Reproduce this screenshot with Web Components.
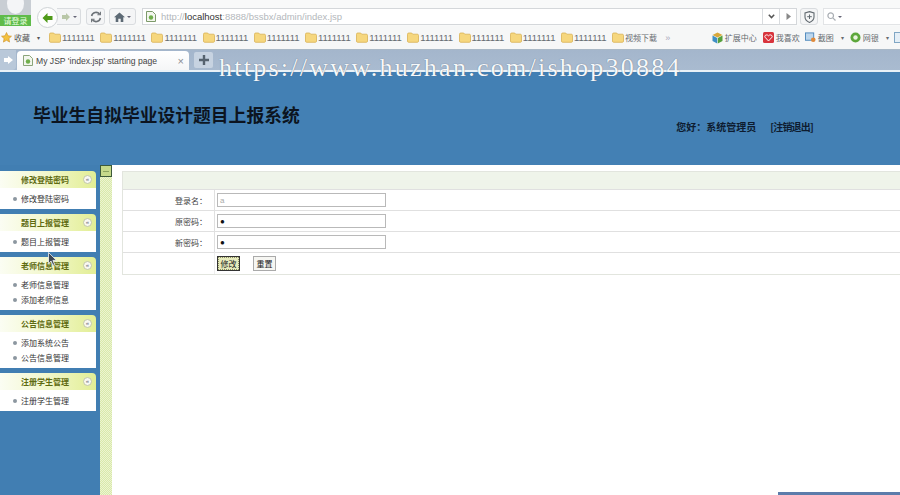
<!DOCTYPE html>
<html lang="zh">
<head>
<meta charset="utf-8">
<title>My JSP 'index.jsp' starting page</title>
<style>
  html, body { margin: 0; padding: 0; height: 100%; overflow: hidden; background: #fff; }
  body { width: 900px; height: 495px; position: relative; display: flex; flex-direction: column;
         font-family: "Liberation Sans", "Noto Sans CJK SC", sans-serif; font-size: 8px; color: #222; }
  app-body { flex: 1; min-height: 0; }
</style>
</head>
<body>
<browser-toolbar></browser-toolbar>
<bookmark-bar></bookmark-bar>
<tab-strip></tab-strip>
<app-header></app-header>
<app-body>
  <side-menu slot="side">
    <menu-group title="修改登陆密码"><menu-item>修改登陆密码</menu-item></menu-group>
    <menu-group title="题目上报管理"><menu-item>题目上报管理</menu-item></menu-group>
    <menu-group title="老师信息管理"><menu-item>老师信息管理</menu-item><menu-item>添加老师信息</menu-item></menu-group>
    <menu-group title="公告信息管理"><menu-item>添加系统公告</menu-item><menu-item>公告信息管理</menu-item></menu-group>
    <menu-group title="注册学生管理"><menu-item>注册学生管理</menu-item></menu-group>
  </side-menu>
  <password-form slot="main"></password-form>
</app-body>
<mouse-cursor></mouse-cursor>
<water-mark></water-mark>

<script>
const FOLDER = `<svg width="13" height="11" viewBox="0 0 13 11"><path d="M.5 2.2C.5 1.4 1 1 1.7 1h3l1 1.2h4.600c.7 0 1.200.4 1.200 1.100v5.900c0 .7-.5 1.100-1.200 1.100H1.700c-.7 0-1.200-.4-1.200-1.100z" fill="#f6d77e" stroke="#d9b355" stroke-width=".8"/></svg>`;

class BrowserToolbar extends HTMLElement {
  constructor() {
    super();
    this.attachShadow({ mode: 'open' }).innerHTML = `
      <style>
        :host { display: flex; height: 26px; align-items: flex-start; background: #f8f9f9; box-sizing: border-box; }
        .avatar { width: 31px; height: 26px; background: #c9ced4; display: flex; flex-direction: column; flex: none; overflow: hidden; }
        .avatar i { display: block; width: 17px; height: 21px; border-radius: 50%; background: #f4f5f7; margin: -7px 0 0 7px; flex: none; }
        .avatar span { background: #5fbb4a; color: #eaffe0; font: 8px/11px "Noto Sans CJK SC", sans-serif; height: 11px; text-align: center; margin-top: auto; flex: none; }
        .back { width: 19px; height: 19px; margin: 7px 0 0 6px; border-radius: 50%; background: #fdfdfd; border: 1px solid #cfd3d6; display: flex; align-items: center; justify-content: center; flex: none; z-index: 1; }
        .btn { height: 15px; margin-top: 8px; border: 1px solid #d9dcdf; border-radius: 3px; background: #f4f5f6; display: flex; align-items: center; justify-content: center; gap: 2px; flex: none; }
        .fwd { width: 23px; margin-left: -1px; border-left: 0; border-radius: 0 3px 3px 0; }
        .reload { width: 17px; margin-left: 5px; }
        .home { width: 25px; margin-left: 4px; }
        .caret { width: 0; height: 0; border: 2px solid transparent; border-top: 2px solid #667; border-bottom: 0; }
        .url { flex: 1; height: 15px; margin: 8px 0 0 6px; border: 1px solid #d4d7da; background: #fff; display: flex; align-items: center; font: 9.500px "Liberation Sans", sans-serif; color: #b4b8bc; min-width: 0; }
        .url > svg { margin: 0 5px 0 3px; }
        .url b { font-weight: normal; color: #333; }
        .url .fill { flex: 1; }
        .seg { width: 16px; height: 15px; border-left: 1px solid #d9dcdf; display: flex; align-items: center; justify-content: center; }
        .shield { width: 16px; margin-left: 3px; }
        .search { width: 77px; height: 17px; margin: 8px 0 0 5px; background: #fff; border: 1px solid #e2e4e6; border-right: 0; display: flex; align-items: center; padding-left: 3px; gap: 2px; flex: none; box-sizing: border-box; }
      </style>
      <div class="avatar"><i></i><span>请登录</span></div>
      <div class="back"><svg width="13" height="12" viewBox="0 0 13 12"><path d="M6.500 1 1.500 6l5 5V8h5V4h-5z" fill="#4f9a18"/></svg></div>
      <div class="btn fwd"><svg width="10" height="10" viewBox="0 0 10 10"><path d="M5 1l4 4-4 4V7H1V3h4z" fill="#b9c7a8"/></svg><span class="caret"></span></div>
      <div class="btn reload"><svg width="12" height="12" viewBox="0 0 12 12" fill="none" stroke="#6d7378" stroke-width="1.600"><path d="M1.600 5A4.500 4.500 0 0 1 9.600 3.200M10.400 7A4.500 4.500 0 0 1 2.400 8.800"/><path d="M10.400 .8v3H7.400M1.600 11.200v-3h3" stroke-width="1.100"/></svg></div>
      <div class="btn home"><svg width="11" height="10" viewBox="0 0 11 10"><path d="M5.500 .5 0 5.300h1.700V10h2.600V6.800h2.400V10h2.600V5.300H11z" fill="#5d6a75"/></svg><span class="caret"></span></div>
      <div class="url">
        <svg width="10" height="11" viewBox="0 0 10 11"><path d="M.5.5h6l3 3v7h-9z" fill="#f3f6ee" stroke="#7d9a6a"/><circle cx="5" cy="6.500" r="2.200" fill="#6fae4b"/></svg>
        <span>http://<b>localhost</b>:8888/bssbx/admin/index.jsp</span><span class="fill"></span>
        <span class="seg"><svg width="7" height="5" viewBox="0 0 7 5"><path d="M.8.8 3.500 3.600 6.200.8" fill="none" stroke="#555" stroke-width="1.500"/></svg></span>
        <span class="seg"><svg width="5" height="7" viewBox="0 0 5 7"><path d="M.5 0 5 3.500.5 7z" fill="#888"/></svg></span>
      </div>
      <div class="btn shield"><svg width="11" height="12" viewBox="0 0 11 12"><path d="M5.500.6 10 2v4c0 2.800-2 4.400-4.500 5.400C3 10.400 1 8.800 1 6V2z" fill="none" stroke="#626a70" stroke-width="1.100"/><path d="M5.500 3.500v4.500M3.200 5.700h4.600" stroke="#626a70"/></svg></div>
      <div class="search"><svg width="9" height="9" viewBox="0 0 9 9" fill="none" stroke="#a9aeb3" stroke-width="1.200"><circle cx="3.700" cy="3.700" r="2.800"/><path d="M5.800 5.800 8.500 8.500"/></svg><span class="caret"></span></div>`;
  }
}

class BookmarkBar extends HTMLElement {
  constructor() {
    super();
    const links = Array(11).fill('1111111').concat('视频下载');
    this.attachShadow({ mode: 'open' }).innerHTML = `
      <style>
        :host { display: flex; height: 24px; background: #f6f7f7; align-items: center; border-bottom: 1px solid #a9b8c6; box-sizing: border-box; font: 8px "Liberation Sans", "Noto Sans CJK SC", sans-serif; color: #666b70; overflow: hidden; }
        .fav { display: flex; align-items: center; gap: 2px; margin-left: 1px; width: 48px; flex: none; color: #555; }
        .fav em { font-style: normal; margin-left: 5px; font-size: 6px; }
        .links { display: flex; flex: none; }
        .l { width: 51.200px; display: flex; align-items: center; gap: 0; flex: none; font-size: 9.500px; white-space: nowrap; }
        .l.cjk { font-size: 8px; }
        .more { width: 48.600px; color: #aab; flex: none; box-sizing: border-box; padding-left: 2px; font-size: 9px; }
        .tools { display: flex; align-items: center; flex: none; }
        .t { display: flex; align-items: center; gap: 2px; white-space: nowrap; margin-right: 6px; }
        .t small { font-size: 6px; margin-left: 5px; }
      </style>
      <div class="fav"><svg width="11" height="11" viewBox="0 0 11 11"><path d="M5.500.5l1.500 3.300 3.500.4-2.600 2.400.7 3.500-3.100-1.800-3.100 1.800.7-3.500L.5 4.200 4 3.800z" fill="#f3c13e" stroke="#cf8f24" stroke-width=".6"/></svg>收藏<em>▾</em></div>
      <div class="links">${links.map(t => `<div class="l${t[0] === '1' ? '' : ' cjk'}">${FOLDER}<span>${t}</span></div>`).join('')}</div>
      <div class="more">»</div>
      <div class="tools">
        <div class="t"><svg width="11" height="12" viewBox="0 0 11 12"><path d="M5.500.5 10.500 3 5.500 5.500.5 3z" fill="#d8a83a"/><path d="M.5 3.500 5.200 6v5.500L.5 9z" fill="#3e8fc4"/><path d="M10.500 3.500 5.800 6v5.500L10.500 9z" fill="#55a03c"/></svg>扩展中心</div>
        <div class="t" style="margin-right:5px"><svg width="11" height="11" viewBox="0 0 11 11"><rect width="11" height="11" rx="1.500" fill="#d8343c"/><path d="M5.500 9 2 5.200C1 3.500 3.800 1.800 5.500 3.800 7.200 1.800 10 3.500 9 5.200z" fill="none" stroke="#fff"/></svg>我喜欢</div>
        <div class="t"><svg width="11" height="11" viewBox="0 0 12 11"><rect x=".5" y=".5" width="9" height="8" fill="#bcd6ec" stroke="#4b86bb"/><circle cx="9" cy="8" r="2.500" fill="#e08a3a"/></svg>截图<small>▾</small></div>
        <div class="t" style="margin-right:5px"><svg width="11" height="11" viewBox="0 0 11 11"><circle cx="5.500" cy="5.500" r="5" fill="#5da73b"/><circle cx="5.500" cy="5.500" r="2.200" fill="#e9f3de"/></svg>网银<small>▾</small></div>
        <div class="t"><svg width="6" height="11" viewBox="0 0 6 11"><rect x=".5" y=".5" width="8" height="10" fill="#e4eef6" stroke="#7fa6c4"/></svg></div>
      </div>`;
  }
}

class TabStrip extends HTMLElement {
  constructor() {
    super();
    this.attachShadow({ mode: 'open' }).innerHTML = `
      <style>
        :host { display: flex; height: 20px; background: linear-gradient(#a4b6cc, #a9bbd0); align-items: flex-end; box-sizing: border-box; font: 8.600px "Liberation Sans", sans-serif; color: #444; }
        .side { width: 16px; height: 20px; background: #b9c8d9; border-radius: 0 0 4px 0; display: flex; align-items: center; justify-content: center; flex: none; }
        .tab { width: 172px; height: 19px; background: linear-gradient(#fff, #f5f6f7); border-radius: 4px 4px 0 0; display: flex; align-items: center; padding: 0 5px 0 6px; box-sizing: border-box; gap: 3px; flex: none; margin-left: 1px; }
        .tab span { flex: 1; white-space: nowrap; }
        .tab i { font-style: normal; color: #8a8f94; font-size: 11px; }
        .new { width: 19px; height: 16px; margin: 0 0 2px 5px; background: #c7d3e1; border-radius: 2px; display: flex; align-items: center; justify-content: center; flex: none; }
      </style>
      <div class="side"><svg width="9" height="8" viewBox="0 0 9 8"><path d="M0 2h4V0l5 4-5 4V6H0z" fill="#fff"/></svg></div>
      <div class="tab">
        <svg width="10" height="11" viewBox="0 0 10 11"><path d="M.5.5h6l3 3v7h-9z" fill="#f3f6ee" stroke="#8ba57a"/><circle cx="5" cy="6.500" r="2.200" fill="#6fae4b"/></svg>
        <span>My JSP 'index.jsp' starting page</span><i>×</i>
      </div>
      <div class="new"><svg width="10" height="10" viewBox="0 0 10 10"><path d="M5 0v10M0 5h10" stroke="#56636f" stroke-width="2.400"/></svg></div>`;
  }
}

class AppHeader extends HTMLElement {
  constructor() {
    super();
    this.attachShadow({ mode: 'open' }).innerHTML = `
      <style>
        :host { display: flex; height: 95px; background: #4380b4; border-top: 2px solid #e9f1f7; box-sizing: border-box; color: #0e1c30; font-family: "Noto Sans CJK SC", sans-serif; }
        h1 { margin: 31px 0 0 33px; font-size: 17.800px; line-height: 22px; font-weight: bold; color: #0c1420; white-space: nowrap; }
        .user { margin: 48px 87px 0 auto; display: flex; gap: 14px; font: bold 10px/13px "Noto Sans CJK SC", sans-serif; white-space: nowrap; }
        .user span + span { letter-spacing: -.8px; }
      </style>
      <h1>毕业生自拟毕业设计题目上报系统</h1>
      <div class="user"><span>您好：系统管理员</span><span>[注销退出]</span></div>`;
  }
}

class AppBody extends HTMLElement {
  constructor() {
    super();
    this.attachShadow({ mode: 'open' }).innerHTML = `
      <style>
        :host { display: flex; background: #fff; }
        .left { width: 100px; background: #417eb2; flex: none; padding-top: 6px; box-sizing: border-box; }
        .split { width: 12px; flex: none; background-color: #e2eebb;
                 background-image: repeating-conic-gradient(#ecf4d2 0 25%, #d9e9aa 0 50%); background-size: 2px 2px; }
        .split i { display: flex; align-items: center; justify-content: center; width: 12px; height: 12px; background: #c5d98a; border: 1px solid #3d5a3a; box-sizing: border-box; }
        .split i::before { content: ""; width: 6px; height: 1px; background: #8aa35e; }
        .main { flex: 1; padding: 6px 0 0 10px; min-width: 0; position: relative; }
        .bar { position: absolute; right: 0; bottom: 0; width: 122px; height: 3px; background: #5c7cab; }
      </style>
      <div class="left"><slot name="side"></slot></div>
      <div class="split"><i></i></div>
      <div class="main"><slot name="main"></slot><div class="bar"></div></div>`;
  }
}

class SideMenu extends HTMLElement {
  constructor() {
    super();
    this.attachShadow({ mode: 'open' }).innerHTML = `
      <style>:host { display: flex; flex-direction: column; gap: 5px; width: 96px; }</style><slot></slot>`;
  }
}

class MenuGroup extends HTMLElement {
  constructor() {
    super();
    this.attachShadow({ mode: 'open' }).innerHTML = `
      <style>
        :host { display: block; font: 8px "Noto Sans CJK SC", sans-serif; }
        .head { height: 17px; background: linear-gradient(90deg, #fbfdf3 0%, #f3f8cf 45%, #e2ee95 100%); border-radius: 0 4px 0 0; display: flex; align-items: center; color: #5e6a10; font-weight: bold; padding-left: 21px; }
        .head span { flex: 1; }
        .head i { width: 9px; height: 9px; margin-right: 4px; border-radius: 50%; background: #f8f8f2; border: 1px solid #c2c8a8; box-sizing: border-box; font: 6px/7px "Liberation Sans", sans-serif; text-align: center; color: #667; }
        .body { background: #fff; padding: 3px 0; display: flex; flex-direction: column; }
      </style>
      <div class="head"><span>${this.getAttribute('title')}</span><i>«</i></div>
      <div class="body"><slot></slot></div>`;
    this.removeAttribute('title');
  }
}

class MenuItem extends HTMLElement {
  constructor() {
    super();
    this.attachShadow({ mode: 'open' }).innerHTML = `
      <style>
        :host { display: flex; align-items: center; height: 15px; padding-left: 13px; color: #333; }
        b { width: 4px; height: 4px; border-radius: 50%; background: #8c97a0; margin-right: 4px; flex: none; }
      </style>
      <b></b><slot></slot>`;
  }
}

class PasswordForm extends HTMLElement {
  constructor() {
    super();
    const row = (label, value, color) => `
      <div class="l">${label}：</div>
      <div class="f"><span class="inp" style="color:${color}">${value}</span></div>`;
    this.attachShadow({ mode: 'open' }).innerHTML = `
      <style>
        :host { display: grid; grid-template-columns: 91px 1fr; grid-template-rows: 17px 21px 21px 21px 22px; border: 1px solid #e2e5de; border-right: 0; box-sizing: border-box; height: 104px; font: 8px "Noto Sans CJK SC", sans-serif; color: #444; }
        .top { grid-column: 1 / 3; background: #eff4ea; }
        .l, .f { border-top: 1px solid #e0e0e0; display: flex; align-items: center; box-sizing: border-box; }
        .l { justify-content: flex-end; padding-right: 7px; }
        .f { border-left: 1px solid #e0e0e0; padding-left: 2px; gap: 13px; }
        .inp { width: 169px; height: 14px; border: 1px solid #b9b9b9; background: #fff; display: flex; align-items: center; padding-left: 2px; box-sizing: border-box; font: 8px "Liberation Sans", sans-serif; }
        .btn { width: 23px; height: 15px; border: 1px solid #aaa; background: #f6f6f2; display: flex; align-items: center; justify-content: center; white-space: nowrap; color: #222; box-sizing: border-box; }
        .btn.on { background: #e6eabb; border: 1px solid #333; outline: 1px dotted #8a8f60; outline-offset: -2px; }
      </style>
      <div class="top"></div>
      ${row('登录名', 'a', '#aaa')}
      ${row('原密码', '●', '#111')}
      ${row('新密码', '●', '#111')}
      <div class="l"></div>
      <div class="f" style="border-left-color:#eee"><span class="btn on">修改</span><span class="btn">重置</span></div>`;
  }
}

class MouseCursor extends HTMLElement {
  constructor() {
    super();
    this.attachShadow({ mode: 'open' }).innerHTML = `
      <style>:host { position: absolute; left: 48px; top: 252px; width: 9px; height: 14px; pointer-events: none; }</style>
      <svg width="9" height="14" viewBox="0 0 9 14"><path d="M.5.5v11l2.600-2.400 1.800 4.200 1.800-.8-1.800-4.100 3.500-.1z" fill="#3c4654" stroke="#f2f4f6" stroke-width=".8"/></svg>`;
  }
}

class WaterMark extends HTMLElement {
  constructor() {
    super();
    this.attachShadow({ mode: 'open' }).innerHTML = `
      <style>
        :host { position: absolute; left: 219px; top: 53px; white-space: nowrap; font: 26px/30px "Liberation Serif", serif; color: #f6f8fa; letter-spacing: 2.260px; text-shadow: 0 0 1px #50627a; pointer-events: none; }
      </style>https://www.huzhan.com/ishop30884`;
  }
}

customElements.define('browser-toolbar', BrowserToolbar);
customElements.define('bookmark-bar', BookmarkBar);
customElements.define('tab-strip', TabStrip);
customElements.define('app-header', AppHeader);
customElements.define('app-body', AppBody);
customElements.define('side-menu', SideMenu);
customElements.define('menu-group', MenuGroup);
customElements.define('menu-item', MenuItem);
customElements.define('password-form', PasswordForm);
customElements.define('mouse-cursor', MouseCursor);
customElements.define('water-mark', WaterMark);
</script>
</body>
</html>
